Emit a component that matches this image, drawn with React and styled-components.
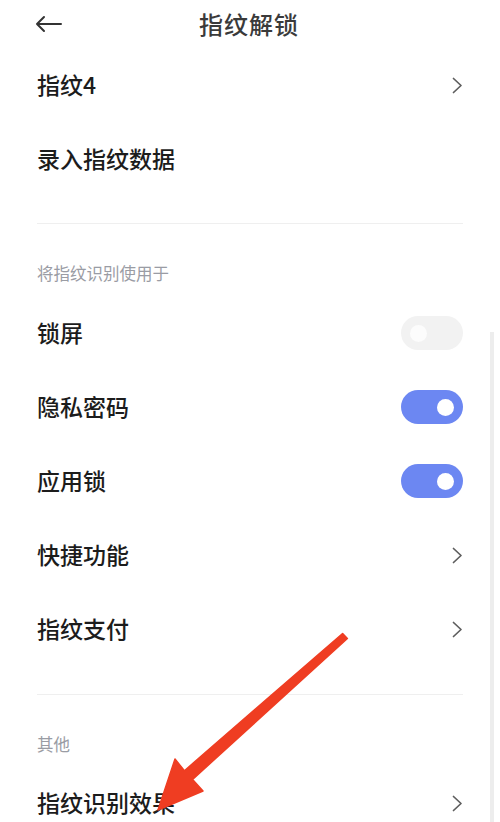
import React from "react";
import styled, { createGlobalStyle } from "styled-components";

const GlobalStyle = createGlobalStyle`
  html, body {
    margin: 0;
    padding: 0;
    background: #fff;
  }
  body {
    font-family: "Noto Sans CJK SC", "Noto Sans", sans-serif;
    -webkit-font-smoothing: antialiased;
  }
`;

const Page = styled.div`
  position: relative;
  width: 500px;
  height: 822px;
  overflow: hidden;
  background: #fff;
`;

const Header = styled.div`
  display: grid;
  grid-template-columns: 1fr auto 1fr;
  align-items: center;
  height: 48px;
  padding: 0 37px 0 35px;
`;

const BackBtn = styled.div`
  display: flex;
  align-items: center;
  justify-self: start;
`;

const Title = styled.div`
  font-size: 24px;
  font-weight: 500;
  color: #3a3a3a;
  letter-spacing: 1px;
  padding-bottom: 2px;
`;

const List = styled.div`
  display: flex;
  flex-direction: column;
  padding: 0 37px;
`;

const Row = styled.div`
  display: flex;
  align-items: center;
  justify-content: space-between;
  height: 74px;
`;

const Label = styled.div`
  font-size: 23px;
  line-height: 30px;
  font-weight: 500;
  color: #1c1c1c;
  padding-bottom: 3px;
`;

const Divider = styled.div`
  height: 1px;
  background: #efefef;
  margin-top: ${(p) => p.$top || 27}px;
`;

const SectionLabel = styled.div`
  font-size: 16.5px;
  line-height: 22px;
  color: #9a9ca4;
  padding-top: 38px;
  margin-bottom: ${(p) => p.$bottom || 12}px;
`;

const Track = styled.div`
  display: flex;
  align-items: center;
  justify-content: ${(p) => (p.$on ? "flex-end" : "flex-start")};
  width: 62px;
  height: 34px;
  border-radius: 17px;
  box-sizing: border-box;
  padding: 0 9px;
  background: ${(p) => (p.$on ? "#6c87f2" : "#f2f2f2")};
`;

const Knob = styled.div`
  width: 17px;
  height: 17px;
  border-radius: 50%;
  background: ${(p) => (p.$on ? "#fff" : "#fcfcfc")};
`;

const ScrollBar = styled.div`
  position: absolute;
  right: 6px;
  top: 332px;
  bottom: 0;
  width: 4px;
  background: #ededed;
`;

const Overlay = styled.svg`
  position: absolute;
  left: 0;
  top: 0;
  pointer-events: none;
`;

const Chevron = () => (
  <svg width="11" height="17" viewBox="0 0 11 17">
    <path d="M1.5 1.5 L9 8.5 L1.5 15.5" fill="none" stroke="#5e5e5e" strokeWidth="1.7" strokeLinecap="round" strokeLinejoin="round" />
  </svg>
);

const Toggle = ({ on }) => (
  <Track $on={on}>
    <Knob $on={on} />
  </Track>
);

const App = () => (
  <Page>
    <GlobalStyle />
    <Header>
      <BackBtn>
        <svg width="28" height="18" viewBox="0 0 28 18">
          <path d="M26 9 H2 M9 2 L2 9 L9 16" fill="none" stroke="#333" strokeWidth="2" strokeLinecap="round" strokeLinejoin="round" />
        </svg>
      </BackBtn>
      <Title>指纹解锁</Title>
      <div />
    </Header>
    <List>
      <Row>
        <Label>指纹4</Label>
        <Chevron />
      </Row>
      <Row>
        <Label>录入指纹数据</Label>
      </Row>
      <Divider />
      <SectionLabel>将指纹识别使用于</SectionLabel>
      <Row>
        <Label>锁屏</Label>
        <Toggle on={false} />
      </Row>
      <Row>
        <Label>隐私密码</Label>
        <Toggle on />
      </Row>
      <Row>
        <Label>应用锁</Label>
        <Toggle on />
      </Row>
      <Row>
        <Label>快捷功能</Label>
        <Chevron />
      </Row>
      <Row>
        <Label>指纹支付</Label>
        <Chevron />
      </Row>
      <Divider $top={28} />
      <SectionLabel $bottom={11}>其他</SectionLabel>
      <Row>
        <Label>指纹识别效果</Label>
        <Chevron />
      </Row>
    </List>
    <ScrollBar />
    <Overlay width="500" height="822" viewBox="0 0 500 822">
      <polygon
        points="342.6,633.5 347.4,638.5 192.6,779.4 203,791 158,810 175,759 184.4,770.7"
        fill="#ef3d22"
        strokeLinejoin="round"
        stroke="#ef3d22"
        strokeWidth="1.5"
      />
    </Overlay>
  </Page>
);

export default App;
